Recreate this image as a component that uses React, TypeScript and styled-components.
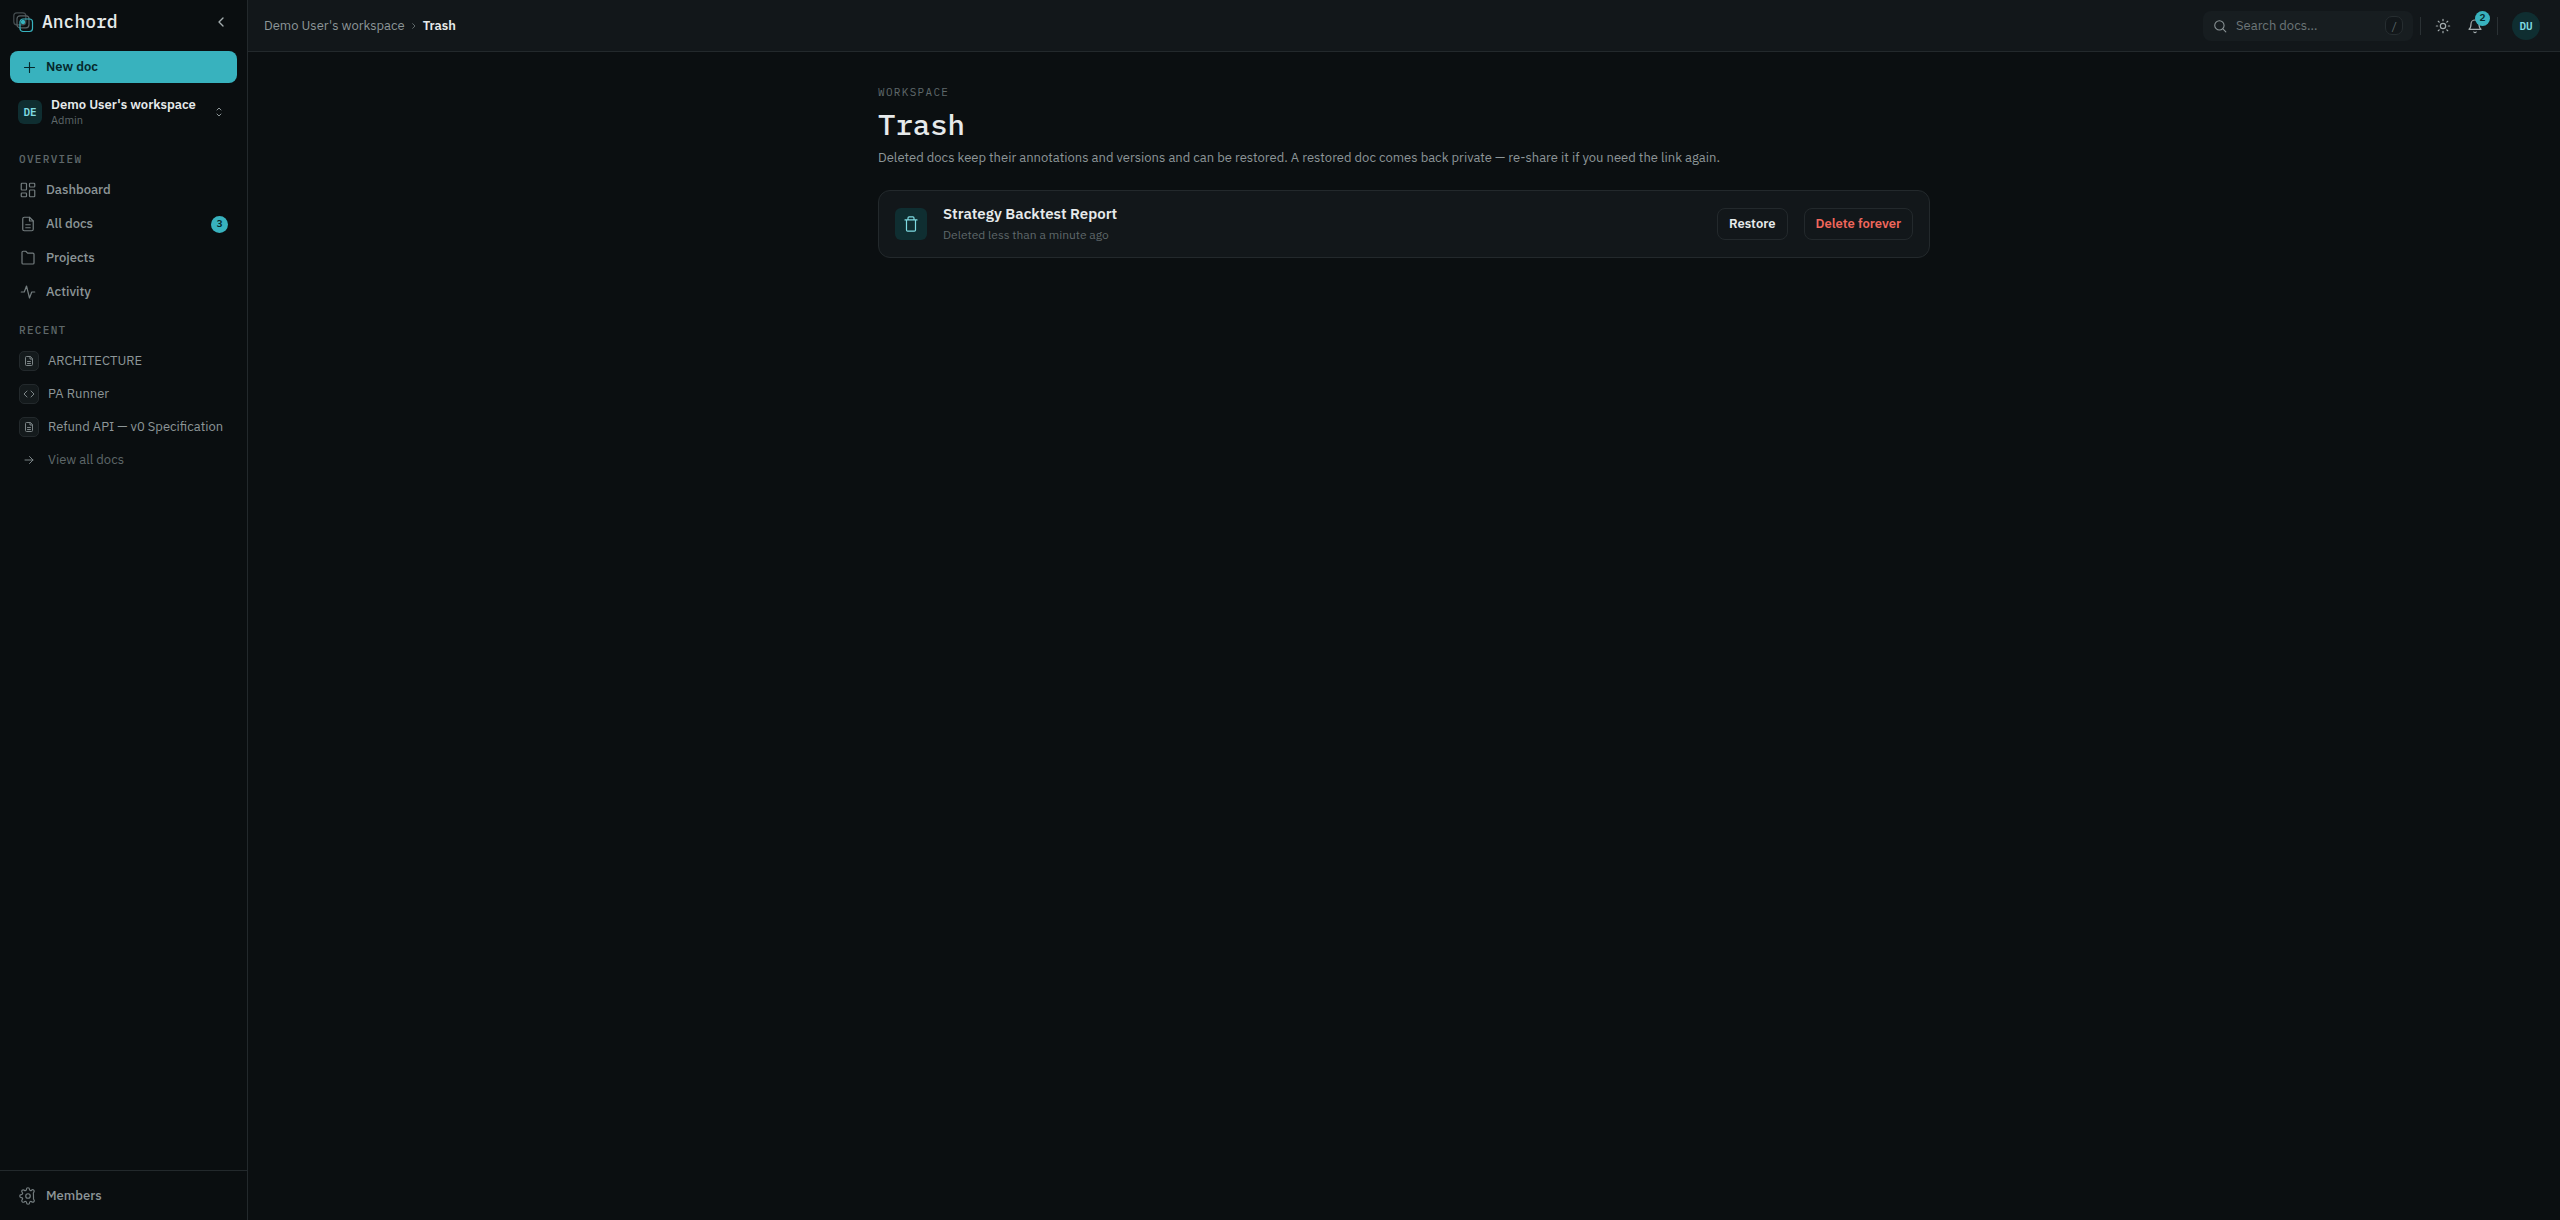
import React from "react";
import styled, { createGlobalStyle, css } from "styled-components";

const sans = '"IBM Plex Sans", "Noto Sans", sans-serif';
const mono = '"IBM Plex Mono", "Liberation Mono", monospace';

const color = {
  page: "#0b0f11",
  sidebar: "#0a0e10",
  surface: "#12171a",
  raised: "#171d20",
  line: "#23292c",
  text: "#e6eaeb",
  muted: "#8d9698",
  faint: "#5f686a",
  teal: "#38b2be",
  tealInk: "#06282b",
  tealDeep: "#0f2e31",
  tealSoft: "#7fdbe2",
  danger: "#f0675c",
};

const GlobalStyle = createGlobalStyle`
  *, *::before, *::after { box-sizing: border-box; }
  body {
    margin: 0;
    background: ${color.page};
    color: ${color.text};
    font-family: ${sans};
    font-size: 13px;
    line-height: 16px;
    -webkit-font-smoothing: antialiased;
  }
  button, input { font: inherit; color: inherit; }
  button { border: 0; padding: 0; background: none; cursor: pointer; }
  a { color: inherit; text-decoration: none; }
  h1, h2, p, ul, ol { margin: 0; padding: 0; font-weight: inherit; }
  ul, ol { list-style: none; }
`;

const Svg = styled.svg<{ $size: number; $weight?: number }>`
  width: ${(p) => p.$size}px;
  height: ${(p) => p.$size}px;
  flex: none;
  display: block;
  fill: none;
  stroke: currentColor;
  stroke-width: ${(p) => p.$weight ?? 1.6};
  stroke-linecap: round;
  stroke-linejoin: round;
`;

type IconProps = { size: number; weight?: number; children: React.ReactNode };
const Icon = ({ size, weight, children }: IconProps) => (
  <Svg viewBox="0 0 24 24" $size={size} $weight={weight} aria-hidden="true">
    {children}
  </Svg>
);

const docShape = (
  <>
    <path d="M14 3H7a2 2 0 0 0-2 2v14a2 2 0 0 0 2 2h10a2 2 0 0 0 2-2V8z" />
    <path d="M14 3v5h5M9 13h6M9 17h6" />
  </>
);

const dashboardShape = (
  <>
    <rect x="3" y="3" width="7" height="9" rx="1" />
    <rect x="14" y="3" width="7" height="5" rx="1" />
    <rect x="14" y="12" width="7" height="9" rx="1" />
    <rect x="3" y="16" width="7" height="5" rx="1" />
  </>
);

const folderShape = (
  <path d="M4 4.500A1.500 1.500 0 0 1 5.500 3H9l2.500 2.500h7A1.500 1.500 0 0 1 20 7v11.500a1.500 1.500 0 0 1-1.500 1.500h-13A1.500 1.500 0 0 1 4 18.500z" />
);

const activityShape = <path d="M3 12h4l3-8 4 16 3-8h4" />;

const gearShape = (
  <>
    <circle cx="12" cy="12" r="3" />
    <path d="M19.400 15a1.650 1.650 0 0 0 .33 1.820l.06.06a2 2 0 1 1-2.830 2.830l-.06-.06a1.650 1.650 0 0 0-2.800 1.170V21a2 2 0 0 1-4 0v-.09A1.650 1.650 0 0 0 7.200 19.700l-.06.06a2 2 0 1 1-2.830-2.830l.06-.06a1.650 1.650 0 0 0-1.170-2.800H3a2 2 0 0 1 0-4h.09A1.650 1.650 0 0 0 4.300 7.200l-.06-.06a2 2 0 1 1 2.830-2.830l.06.06a1.650 1.650 0 0 0 2.800-1.170V3a2 2 0 0 1 4 0v.09a1.650 1.650 0 0 0 2.800 1.170l.06-.06a2 2 0 1 1 2.830 2.830l-.06.06a1.650 1.650 0 0 0-.33 1.820z" />
  </>
);

const Shell = styled.div`
  display: grid;
  grid-template-columns: 248px minmax(0, 1fr);
  min-height: 100vh;
`;

const Sidebar = styled.aside`
  display: flex;
  flex-direction: column;
  background: ${color.sidebar};
  border-right: 1px solid ${color.line};
`;

const SidebarBody = styled.div`
  flex: 1;
  padding: 0 10px;
`;

const BrandRow = styled.div`
  display: flex;
  align-items: center;
  justify-content: space-between;
  height: 44px;
  padding: 0 8px 0 2px;
`;

const Brand = styled.a`
  display: flex;
  align-items: center;
  gap: 8px;
  font: 500 18px/24px ${mono};
`;

const IconButton = styled.button`
  display: grid;
  place-items: center;
  width: 16px;
  height: 24px;
  color: #a3acae;
`;

const NewDoc = styled.button`
  display: flex;
  align-items: center;
  gap: 9px;
  width: 100%;
  height: 32px;
  margin-top: 7px;
  padding: 0 12px;
  border-radius: 8px;
  background: ${color.teal};
  color: ${color.tealInk};
  font-weight: 600;
`;

const WorkspaceButton = styled.button`
  display: flex;
  align-items: center;
  gap: 9px;
  width: 100%;
  height: 42px;
  margin-top: 8px;
  padding: 0 12px 0 8px;
  text-align: left;
  color: ${color.muted};
`;

const WorkspaceText = styled.span`
  display: flex;
  flex: 1;
  flex-direction: column;
  min-width: 0;
`;

const WorkspaceName = styled.span`
  color: ${color.text};
  font-weight: 600;
`;

const WorkspaceRole = styled.span`
  color: ${color.faint};
  font-size: 11px;
  line-height: 14px;
`;

const Initials = styled.span<{ $round?: boolean }>`
  display: grid;
  place-items: center;
  flex: none;
  width: ${(p) => (p.$round ? 28 : 24)}px;
  height: ${(p) => (p.$round ? 28 : 24)}px;
  border-radius: ${(p) => (p.$round ? "50%" : "6px")};
  background: ${color.tealDeep};
  color: ${color.tealSoft};
  font: 600 11px/14px ${mono};
`;

const labelText = css`
  font: 400 11px/16px ${mono};
  letter-spacing: 0.12em;
  text-transform: uppercase;
  color: ${color.faint};
`;

const NavLabel = styled.h2<{ $top: number }>`
  ${labelText}
  margin-top: ${(p) => p.$top}px;
  padding: 0 9px;
  font-weight: 500;
`;

const NavList = styled.ul<{ $gap: number }>`
  display: flex;
  flex-direction: column;
  gap: ${(p) => p.$gap}px;
  margin-top: 7px;
`;

const NavLink = styled.a`
  display: flex;
  align-items: center;
  gap: 9px;
  height: 32px;
  padding: 0 9px;
  color: ${color.muted};
  font-weight: 500;

  svg { color: #747d7f; }
`;

const NavText = styled.span`
  flex: 1;
`;

const Count = styled.span<{ $size: number }>`
  display: grid;
  place-items: center;
  width: ${(p) => p.$size}px;
  height: ${(p) => p.$size}px;
  border-radius: 50%;
  background: ${color.teal};
  color: ${color.tealInk};
  font: 600 10px/14px ${mono};
`;

const RecentLink = styled.a<{ $dim?: boolean }>`
  display: flex;
  align-items: center;
  gap: 9px;
  height: 32px;
  padding: 0 9px;
  white-space: nowrap;
  color: ${(p) => (p.$dim ? color.faint : color.muted)};
`;

const Tile = styled.span<{ $plain?: boolean }>`
  display: grid;
  place-items: center;
  width: 20px;
  height: 20px;
  border: 1px solid ${(p) => (p.$plain ? "transparent" : color.line)};
  border-radius: 5px;
  background: ${(p) => (p.$plain ? "transparent" : "#141a1c")};
  color: #7c8587;
`;

const SidebarFoot = styled.nav`
  padding: 9px 10px 8px;
  border-top: 1px solid ${color.line};
`;

const Page = styled.div`
  display: flex;
  flex-direction: column;
  min-width: 0;
`;

const TopBar = styled.header`
  display: flex;
  align-items: center;
  justify-content: space-between;
  height: 52px;
  padding: 0 20px 0 16px;
  background: ${color.surface};
  border-bottom: 1px solid ${color.line};
`;

const Crumbs = styled.ol`
  display: flex;
  align-items: center;
  gap: 5px;
  color: ${color.muted};

  svg { color: ${color.faint}; }
`;

const Current = styled.li`
  color: ${color.text};
  font-weight: 600;
`;

const Tools = styled.div`
  display: flex;
  align-items: center;
`;

const Search = styled.label`
  display: flex;
  align-items: center;
  gap: 9px;
  width: 210px;
  height: 30px;
  padding: 0 10px;
  border-radius: 8px;
  background: ${color.raised};
  color: ${color.muted};
`;

const SearchInput = styled.input.attrs({ type: "search" })`
  flex: 1;
  min-width: 0;
  padding: 0;
  border: 0;
  outline: 0;
  background: transparent;

  &::placeholder { color: #6d7678; opacity: 1; }
`;

const Key = styled.kbd`
  display: grid;
  place-items: center;
  width: 18px;
  height: 19px;
  border: 1px solid #262d30;
  border-radius: 7px;
  background: ${color.surface};
  color: ${color.faint};
  font: 400 11px/14px ${mono};
`;

const Divider = styled.span`
  width: 1px;
  height: 18px;
  margin: 0 7px;
  background: #2a3134;
`;

const ToolButton = styled.button`
  position: relative;
  display: grid;
  place-items: center;
  width: 30px;
  height: 30px;
  color: #a3acae;

  ${Count} {
    position: absolute;
    top: 0;
    right: 0;
  }
`;

const ToolGroup = styled.div`
  display: flex;
  gap: 2px;
`;

const Account = styled.button`
  margin-left: 7px;
`;

const Content = styled.main`
  width: 100%;
  max-width: 1100px;
  margin: 0 auto;
  padding: 32px 24px;
`;

const Eyebrow = styled.p`
  ${labelText}
`;

const Title = styled.h1`
  margin-top: 5px;
  font: 500 29px/38px ${mono};
`;

const Lead = styled.p`
  margin-top: 6px;
  line-height: 18px;
  color: ${color.muted};
`;

const Card = styled.li`
  display: flex;
  align-items: center;
  gap: 16px;
  margin-top: 23px;
  padding: 12px 16px;
  min-height: 68px;
  border: 1px solid ${color.line};
  border-radius: 12px;
  background: ${color.surface};
`;

const CardIcon = styled.span`
  display: grid;
  place-items: center;
  width: 32px;
  height: 32px;
  border-radius: 6px;
  background: ${color.tealDeep};
  color: ${color.tealSoft};
`;

const CardText = styled.div`
  flex: 1;
  min-width: 0;
`;

const CardTitle = styled.h2`
  font-size: 15px;
  line-height: 22px;
  font-weight: 600;
`;

const CardMeta = styled.p`
  font-size: 12px;
  line-height: 20px;
  color: ${color.faint};
`;

const Action = styled.button<{ $danger?: boolean }>`
  height: 32px;
  padding: 0 11px;
  border: 1px solid ${color.line};
  border-radius: 8px;
  color: ${(p) => (p.$danger ? color.danger : color.text)};
  font-weight: 600;
`;

const Logo = () => (
  <Svg viewBox="0 0 22 22" $size={22} $weight={1.2} aria-hidden="true">
    <rect x="1.800" y="1.800" width="12" height="12" rx="3" stroke="#454d50" />
    <rect x="5" y="4.800" width="12" height="12" rx="3" stroke="#596265" />
    <rect x="8" y="8" width="12.500" height="12.500" rx="3" stroke={color.teal} />
    <circle cx="11" cy="11" r="2.200" fill={color.teal} stroke="none" />
  </Svg>
);

const navItems = [
  { name: "Dashboard", shape: dashboardShape },
  { name: "All docs", shape: docShape, count: 3 },
  { name: "Projects", shape: folderShape },
  { name: "Activity", shape: activityShape },
];

const recentItems = [
  { name: "ARCHITECTURE", code: false },
  { name: "PA Runner", code: true },
  { name: "Refund API — v0 Specification", code: false },
];

const deletedDocs = [{ title: "Strategy Backtest Report", when: "Deleted less than a minute ago" }];

export default function App() {
  return (
    <>
      <GlobalStyle />
      <Shell>
        <Sidebar>
          <SidebarBody>
            <BrandRow>
              <Brand href="#">
                <Logo />
                Anchord
              </Brand>
              <IconButton aria-label="Collapse sidebar">
                <Icon size={16} weight={2}>
                  <path d="M15 6l-6 6 6 6" />
                </Icon>
              </IconButton>
            </BrandRow>
            <NewDoc>
              <Icon size={15} weight={1.8}>
                <path d="M12 4v16M4 12h16" />
              </Icon>
              New doc
            </NewDoc>
            <WorkspaceButton>
              <Initials>DE</Initials>
              <WorkspaceText>
                <WorkspaceName>Demo User's workspace</WorkspaceName>
                <WorkspaceRole>Admin</WorkspaceRole>
              </WorkspaceText>
              <Icon size={12} weight={2}>
                <path d="M8 8l4-4 4 4M8 16l4 4 4-4" />
              </Icon>
            </WorkspaceButton>
            <nav aria-label="Main">
              <NavLabel $top={18}>Overview</NavLabel>
              <NavList $gap={2}>
                {navItems.map((item) => (
                  <li key={item.name}>
                    <NavLink href="#">
                      <Icon size={18}>{item.shape}</Icon>
                      <NavText>{item.name}</NavText>
                      {item.count && <Count $size={17}>{item.count}</Count>}
                    </NavLink>
                  </li>
                ))}
              </NavList>
              <NavLabel $top={14}>Recent</NavLabel>
              <NavList $gap={1}>
                {recentItems.map((item) => (
                  <li key={item.name}>
                    <RecentLink href="#">
                      <Tile>
                        <Icon size={12} weight={2}>
                          {item.code ? <path d="M8 6l-6 6 6 6M16 6l6 6-6 6" /> : docShape}
                        </Icon>
                      </Tile>
                      {item.name}
                    </RecentLink>
                  </li>
                ))}
                <li>
                  <RecentLink href="#" $dim>
                    <Tile $plain>
                      <Icon size={12} weight={2}>
                        <path d="M4 12h16M13 5l7 7-7 7" />
                      </Icon>
                    </Tile>
                    View all docs
                  </RecentLink>
                </li>
              </NavList>
            </nav>
          </SidebarBody>
          <SidebarFoot aria-label="Workspace">
            <NavLink href="#">
              <Icon size={18}>{gearShape}</Icon>
              Members
            </NavLink>
          </SidebarFoot>
        </Sidebar>

        <Page>
          <TopBar>
            <nav aria-label="Breadcrumb">
              <Crumbs>
                <li>
                  <a href="#">Demo User's workspace</a>
                </li>
                <li aria-hidden="true">
                  <Icon size={8} weight={3}>
                    <path d="M8 5l7 7-7 7" />
                  </Icon>
                </li>
                <Current aria-current="page">Trash</Current>
              </Crumbs>
            </nav>
            <Tools>
              <Search>
                <Icon size={14} weight={1.8}>
                  <circle cx="11" cy="11" r="8" />
                  <path d="M17 17l5 5" />
                </Icon>
                <SearchInput placeholder="Search docs…" aria-label="Search docs" />
                <Key>/</Key>
              </Search>
              <Divider />
              <ToolGroup>
                <ToolButton aria-label="Switch theme">
                  <Icon size={16} weight={1.8}>
                    <circle cx="12" cy="12" r="4" />
                    <path d="M12 2v2M12 20v2M4.900 4.900l1.400 1.400M17.700 17.700l1.400 1.400M2 12h2M20 12h2M4.900 19.100l1.400-1.400M17.700 6.300l1.400-1.400" />
                  </Icon>
                </ToolButton>
                <ToolButton aria-label="Notifications">
                  <Icon size={16} weight={1.8}>
                    <path d="M6 9a6 6 0 0 1 12 0c0 6 3 8 3 8H3s3-2 3-8" />
                    <path d="M10.300 21a2 2 0 0 0 3.400 0" />
                  </Icon>
                  <Count $size={15}>2</Count>
                </ToolButton>
              </ToolGroup>
              <Divider />
              <Account aria-label="Account">
                <Initials $round>DU</Initials>
              </Account>
            </Tools>
          </TopBar>
          <Content>
            <Eyebrow>Workspace</Eyebrow>
            <Title>Trash</Title>
            <Lead>
              Deleted docs keep their annotations and versions and can be restored. A restored doc comes back
              private — re-share it if you need the link again.
            </Lead>
            <ul>
              {deletedDocs.map((doc) => (
                <Card key={doc.title}>
                  <CardIcon>
                    <Icon size={18} weight={1.6}>
                      <path d="M4 6.500h16M8 6.500V4a1.500 1.500 0 0 1 1.500-1.500h5A1.500 1.500 0 0 1 16 4v2.500M6 6.500v13.500a1.500 1.500 0 0 0 1.500 1.500h9a1.500 1.500 0 0 0 1.500-1.500V6.500" />
                    </Icon>
                  </CardIcon>
                  <CardText>
                    <CardTitle>{doc.title}</CardTitle>
                    <CardMeta>{doc.when}</CardMeta>
                  </CardText>
                  <Action>Restore</Action>
                  <Action $danger>Delete forever</Action>
                </Card>
              ))}
            </ul>
          </Content>
        </Page>
      </Shell>
    </>
  );
}
